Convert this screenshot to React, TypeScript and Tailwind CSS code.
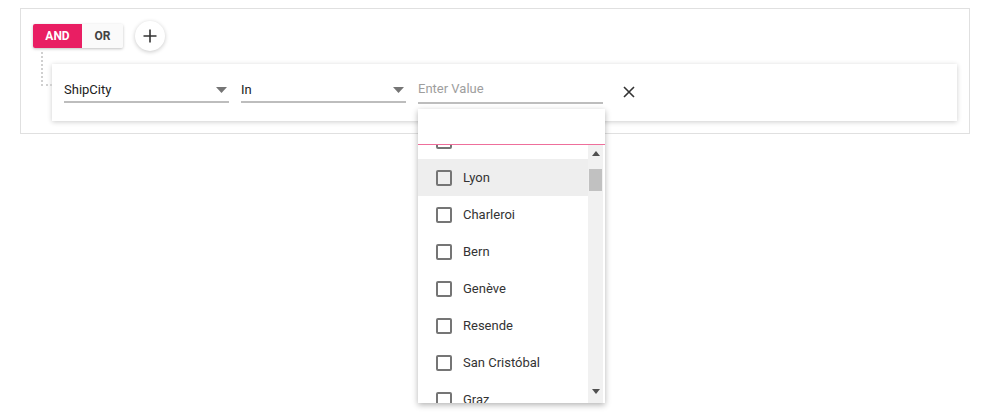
import React from "react";

const cities = [
  "Rio de Janeiro",
  "Lyon",
  "Charleroi",
  "Bern",
  "Genève",
  "Resende",
  "San Cristóbal",
  "Graz",
];

function Caret() {
  return (
    <svg width="11" height="6" viewBox="0 0 11 6" className="shrink-0">
      <path d="M0 0 L11 0 L5.5 6 Z" fill="#757575" />
    </svg>
  );
}

export default function App() {
  return (
    <div className="relative w-[982px] h-[418px] bg-white font-['Roboto','Liberation_Sans',sans-serif]">
      <div className="pt-[8px] pl-[20px]">
        <div className="relative w-[950px] h-[126px] border border-[#e0e0e0] pl-[12px] pt-[12px]">
          {/* header row */}
          <div className="flex items-center gap-[12px] h-[30px]">
            <div className="flex h-[24px] rounded-[2px] shadow-[0_1px_3px_rgba(0,0,0,0.25)] overflow-hidden">
              <div className="w-[49px] flex items-center justify-center bg-[#e91e63] text-white text-[12px] font-bold">
                AND
              </div>
              <div className="w-[41px] flex items-center justify-center bg-[#fafafa] text-[#424242] text-[12px] font-bold">
                OR
              </div>
            </div>
            <div className="w-[30px] h-[30px] rounded-full bg-white shadow-[0_1px_4px_rgba(0,0,0,0.22)] flex items-center justify-center">
              <svg width="14" height="14" viewBox="0 0 14 14">
                <path d="M7 0.5 V13.5 M0.5 7 H13.5" stroke="#333" strokeWidth="1.6" />
              </svg>
            </div>
          </div>

          {/* rule card */}
          <div className="ml-[19px] mt-[13px] w-[905px] h-[57px] bg-white shadow-[0_1px_5px_rgba(0,0,0,0.2)] flex items-start pl-[12px] pt-[14px] gap-[12px]">
            <div className="w-[165px] h-[25px] border-b-2 border-[#bdbdbd] flex items-center justify-between pr-[2px] text-[13px] text-[#212121]">
              <span>ShipCity</span>
              <Caret />
            </div>
            <div className="w-[165px] h-[25px] border-b-2 border-[#bdbdbd] flex items-center justify-between pr-[2px] text-[13px] text-[#212121]">
              <span>In</span>
              <Caret />
            </div>
            <div className="w-[185px] h-[26px] border-b-2 border-[#bdbdbd] flex items-center text-[13px] text-[#9e9e9e]">
              <span className="-mt-[2px]">Enter Value</span>
            </div>
            <div className="ml-[8px] mt-[8px] w-[12px] h-[12px]">
              <svg width="12" height="12" viewBox="0 0 12 12">
                <path d="M1 1 L11 11 M11 1 L1 11" stroke="#333" strokeWidth="1.6" />
              </svg>
            </div>
          </div>

          {/* dotted connector */}
          <div className="absolute left-[20px] top-[43px] w-[11px] h-[34px] border-l-2 border-b-2 border-dotted border-[#d0d0d0]" />
        </div>
      </div>

      {/* popup */}
      <div className="absolute left-[418px] top-[109px] w-[187px] h-[294px] bg-white shadow-[0_2px_6px_rgba(0,0,0,0.3)] flex flex-col">
        <div className="h-[35px] shrink-0" />
        <div className="h-[1px] bg-[#ee6f9b] shrink-0" />
        <div className="flex flex-1 overflow-hidden">
          <div className="w-[170px] overflow-hidden">
            <div className="-mt-[23px]">
              {cities.map((c) => (
                <div
                  key={c}
                  className={
                    "h-[37px] flex items-center pl-[18px] gap-[11px] text-[13px] text-[#333] " +
                    (c === "Lyon" ? "bg-[#eeeeee]" : "")
                  }
                >
                  <div className="w-[16px] h-[16px] border-2 border-[#757575] rounded-[2px] shrink-0" />
                  <span>{c}</span>
                </div>
              ))}
            </div>
          </div>
          <div className="relative w-[15px] bg-[#f1f1f1] flex flex-col items-center">
            <svg width="8" height="5" viewBox="0 0 8 5" className="mt-[6px]">
              <path d="M0 5 L8 5 L4 0 Z" fill="#505050" />
            </svg>
            <div className="mt-[13px] w-[13px] h-[22px] bg-[#c1c1c1]" />
            <div className="flex-1" />
            <svg width="8" height="5" viewBox="0 0 8 5" className="mb-[9px]">
              <path d="M0 0 L8 0 L4 5 Z" fill="#505050" />
            </svg>
          </div>
        </div>
      </div>
    </div>
  );
}
